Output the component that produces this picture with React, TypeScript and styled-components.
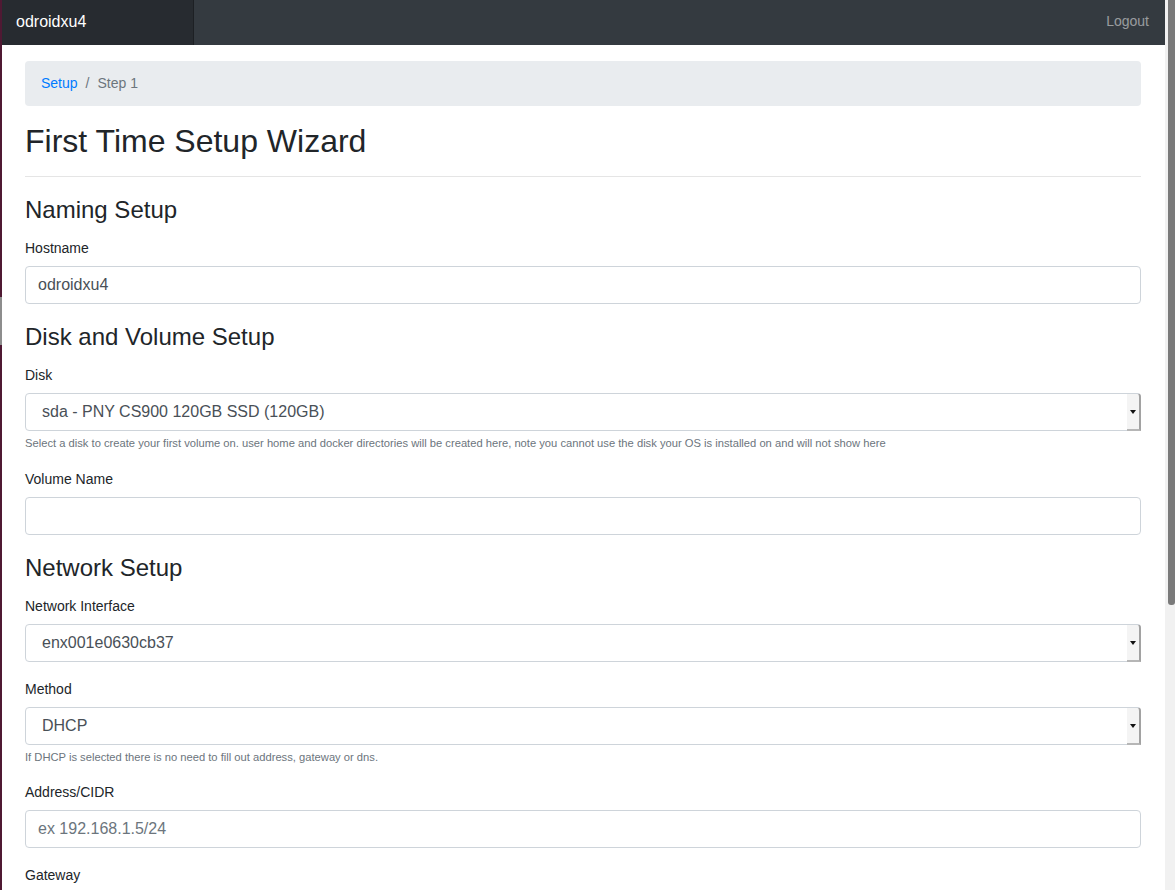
import React from 'react';
import styled, { createGlobalStyle } from 'styled-components';

const GlobalStyle = createGlobalStyle`
  html, body {
    margin: 0;
    padding: 0;
    height: 100%;
    overflow: hidden;
    background: #ffffff;
  }
  body {
    font-family: "Liberation Sans", Arial, Helvetica, sans-serif;
    color: #212529;
  }
  *, *::before, *::after { box-sizing: border-box; }
`;

const Screen = styled.div`
  display: flex;
  height: 100vh;
`;

const WindowEdge = styled.div`
  position: fixed;
  left: 0;
  top: 0;
  width: 2px;
  height: 100vh;
  background: linear-gradient(
    to bottom,
    #4f1933 0px,
    #4f1933 297px,
    #8d8d8d 297px,
    #8d8d8d 345px,
    #4f1933 345px
  );
  z-index: 5;
`;

const Viewport = styled.div`
  flex: 1;
  min-width: 0;
  height: 100vh;
  overflow: hidden;
`;

const ScrollTrack = styled.div`
  width: 10px;
  flex: none;
  display: flex;
  flex-direction: column;
  background: #f1f1f1;
`;

const ScrollThumb = styled.div`
  height: 605px;
  width: 7px;
  margin-left: 3px;
  background: #7a7a7a;
  border-radius: 0 0 3px 3px;
`;

const Navbar = styled.nav`
  height: 45px;
  display: flex;
  align-items: stretch;
  justify-content: space-between;
  background: #343a40;
`;

const Brand = styled.a`
  width: 194px;
  display: flex;
  align-items: center;
  padding: 0 16px 2px;
  background: rgba(0, 0, 0, 0.25);
  box-shadow: inset -1px 0 0 rgba(0, 0, 0, 0.25);
  color: #ffffff;
  font-size: 16px;
  text-decoration: none;
`;

const NavLink = styled.a`
  display: flex;
  align-items: center;
  padding: 0 16px 3px;
  color: rgba(255, 255, 255, 0.5);
  font-size: 14px;
  text-decoration: none;
`;

const Main = styled.main`
  padding: 16px 24px 0 25px;
`;

const Breadcrumb = styled.ol`
  display: flex;
  list-style: none;
  margin: 0 0 16px;
  padding: 12px 16px;
  background: #e9ecef;
  border-radius: 4px;
  font-size: 14px;
  line-height: 21px;
`;

const Crumb = styled.li<{ $active?: boolean }>`
  color: ${(p) => (p.$active ? '#6c757d' : '#007bff')};
  &:not(:first-child)::before {
    content: '/';
    display: inline-block;
    padding: 0 8px;
    color: #6c757d;
  }
`;

const CrumbLink = styled.a`
  color: #007bff;
  text-decoration: none;
`;

const Title = styled.h1`
  margin: 0;
  font-size: 32px;
  font-weight: 400;
  line-height: 1.2;
`;

const Divider = styled.hr`
  margin: 16px 0 19px;
  border: 0;
  border-top: 1px solid rgba(0, 0, 0, 0.1);
`;

const SectionTitle = styled.h4<{ $first?: boolean }>`
  margin: 0 0 13px;
  padding-top: ${(p) => (p.$first ? '0' : '2px')};
  font-size: 24px;
  font-weight: 400;
  line-height: 1.2;
`;

const FormGroup = styled.div`
  margin-bottom: 17px;
`;

const Label = styled.label`
  display: block;
  margin-bottom: 7px;
  font-size: 14px;
  line-height: 21px;
`;

const TextInput = styled.input`
  display: block;
  width: 100%;
  height: 38px;
  padding: 6px 12px;
  font-family: inherit;
  font-size: 16px;
  line-height: 24px;
  color: #495057;
  background: #ffffff;
  border: 1px solid #ced4da;
  border-radius: 4px;
  outline: none;
  &::placeholder { color: #6c757d; opacity: 1; }
`;

const SelectWrap = styled.div`
  position: relative;
`;

const Select = styled.select`
  display: block;
  width: 100%;
  height: 38px;
  padding: 6px 16px;
  font-family: inherit;
  font-size: 16px;
  line-height: 24px;
  color: #495057;
  background: #ffffff;
  border: 1px solid #ced4da;
  border-radius: 4px;
  appearance: none;
  -webkit-appearance: none;
  outline: none;
`;

const SelectButton = styled.span`
  position: absolute;
  top: 0;
  right: 0;
  bottom: 0;
  width: 14px;
  display: flex;
  align-items: center;
  justify-content: center;
  background: #f4f4f4;
  border-top: 1px solid #ced4da;
  border-right: 2px solid #a2a2a2;
  border-bottom: 2px solid #b6b6b6;
  border-top-right-radius: 4px;
  pointer-events: none;
  &::after {
    content: '';
    width: 0;
    height: 0;
    border-left: 3px solid transparent;
    border-right: 3px solid transparent;
    border-top: 4px solid #111;
    margin-top: 1px;
  }
`;

const Help = styled.small`
  display: block;
  margin-top: 4px;
  font-size: 11.2px;
  line-height: 1.5;
  color: #6c757d;
`;

const PrimaryButton = styled.button`
  height: 38px;
  padding: 6px 12px;
  font-family: inherit;
  font-size: 16px;
  color: #ffffff;
  background: #007bff;
  border: 1px solid #007bff;
  border-radius: 4px;
`;

type SelectFieldProps = { label: string; options: string[]; help?: string };

const SelectField: React.FC<SelectFieldProps> = ({ label, options, help }) => (
  <FormGroup>
    <Label>{label}</Label>
    <SelectWrap>
      <Select defaultValue={options[0]}>
        {options.map((o) => (
          <option key={o}>{o}</option>
        ))}
      </Select>
      <SelectButton />
    </SelectWrap>
    {help && <Help>{help}</Help>}
  </FormGroup>
);

type InputFieldProps = { label: string; value?: string; placeholder?: string; help?: string };

const InputField: React.FC<InputFieldProps> = ({ label, value, placeholder, help }) => (
  <FormGroup>
    <Label>{label}</Label>
    <TextInput defaultValue={value} placeholder={placeholder} />
    {help && <Help>{help}</Help>}
  </FormGroup>
);

export default function App() {
  return (
    <>
      <GlobalStyle />
      <WindowEdge />
      <Screen>
        <Viewport>
          <Navbar>
            <Brand href="#">odroidxu4</Brand>
            <NavLink href="#">Logout</NavLink>
          </Navbar>
          <Main>
            <Breadcrumb>
              <Crumb>
                <CrumbLink href="#">Setup</CrumbLink>
              </Crumb>
              <Crumb $active>Step 1</Crumb>
            </Breadcrumb>
            <Title>First Time Setup Wizard</Title>
            <Divider />

            <SectionTitle $first>Naming Setup</SectionTitle>
            <InputField label="Hostname" value="odroidxu4" />

            <SectionTitle>Disk and Volume Setup</SectionTitle>
            <SelectField
              label="Disk"
              options={['sda - PNY CS900 120GB SSD (120GB)']}
              help="Select a disk to create your first volume on. user home and docker directories will be created here, note you cannot use the disk your OS is installed on and will not show here"
            />
            <InputField label="Volume Name" />

            <SectionTitle>Network Setup</SectionTitle>
            <SelectField label="Network Interface" options={['enx001e0630cb37']} />
            <SelectField
              label="Method"
              options={['DHCP', 'Static']}
              help="If DHCP is selected there is no need to fill out address, gateway or dns."
            />
            <InputField label="Address/CIDR" placeholder="ex 192.168.1.5/24" />
            <InputField label="Gateway" placeholder="ex 192.168.1.1" />
            <InputField label="DNS" placeholder="ex 8.8.8.8" />
            <PrimaryButton type="button">Next</PrimaryButton>
          </Main>
        </Viewport>
        <ScrollTrack>
          <ScrollThumb />
        </ScrollTrack>
      </Screen>
    </>
  );
}
